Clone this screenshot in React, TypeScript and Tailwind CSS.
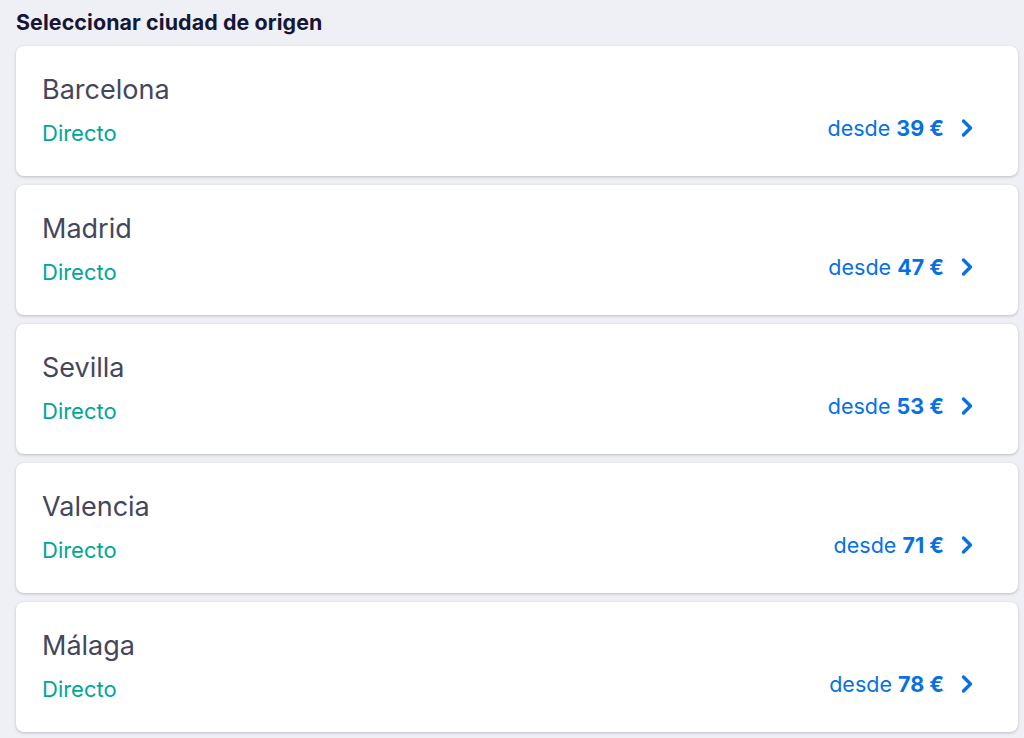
import React from "react";

const cities = [
  { name: "Barcelona", price: 39 },
  { name: "Madrid", price: 47 },
  { name: "Sevilla", price: 53 },
  { name: "Valencia", price: 71 },
  { name: "Málaga", price: 78 },
];

const Chevron = () => (
  <svg width="14" height="20" viewBox="0 0 14 20" fill="none" className="shrink-0">
    <path d="M3.5 3l7 7-7 7" stroke="#0770e3" strokeWidth="3.4" strokeLinecap="round" strokeLinejoin="round" />
  </svg>
);

export default function App() {
  return (
    <div className="min-h-[738px] w-[1024px] bg-[#eff0f6] pl-4 pr-[6px] pt-[8px] font-['Inter',sans-serif]">
      <h1 className="text-[21.4px] font-bold leading-[28px] text-[#161637] tracking-[0.1px]">
        Seleccionar ciudad de origen
      </h1>
      <div className="mt-[10px] flex flex-col gap-[9px]">
        {cities.map((c) => (
          <div
            key={c.name}
            className="flex h-[130px] items-start justify-between rounded-lg bg-white pl-[26px] pr-[44px] shadow-[0_1px_3px_rgba(37,32,31,0.25)]"
          >
            <div className="flex flex-col pt-[28px]">
              <span className="text-[27px] leading-[32px] text-[#44465c]">{c.name}</span>
              <span className="mt-[15px] text-[22px] leading-[24px] text-[#00a698]">Directo</span>
            </div>
            <div className="flex items-center gap-[16px] pt-[70px]">
              <span className="text-[21.5px] leading-[24px] text-[#0770e3]">
                desde <span className="font-bold">{c.price} €</span>
              </span>
              <Chevron />
            </div>
          </div>
        ))}
      </div>
    </div>
  );
}
